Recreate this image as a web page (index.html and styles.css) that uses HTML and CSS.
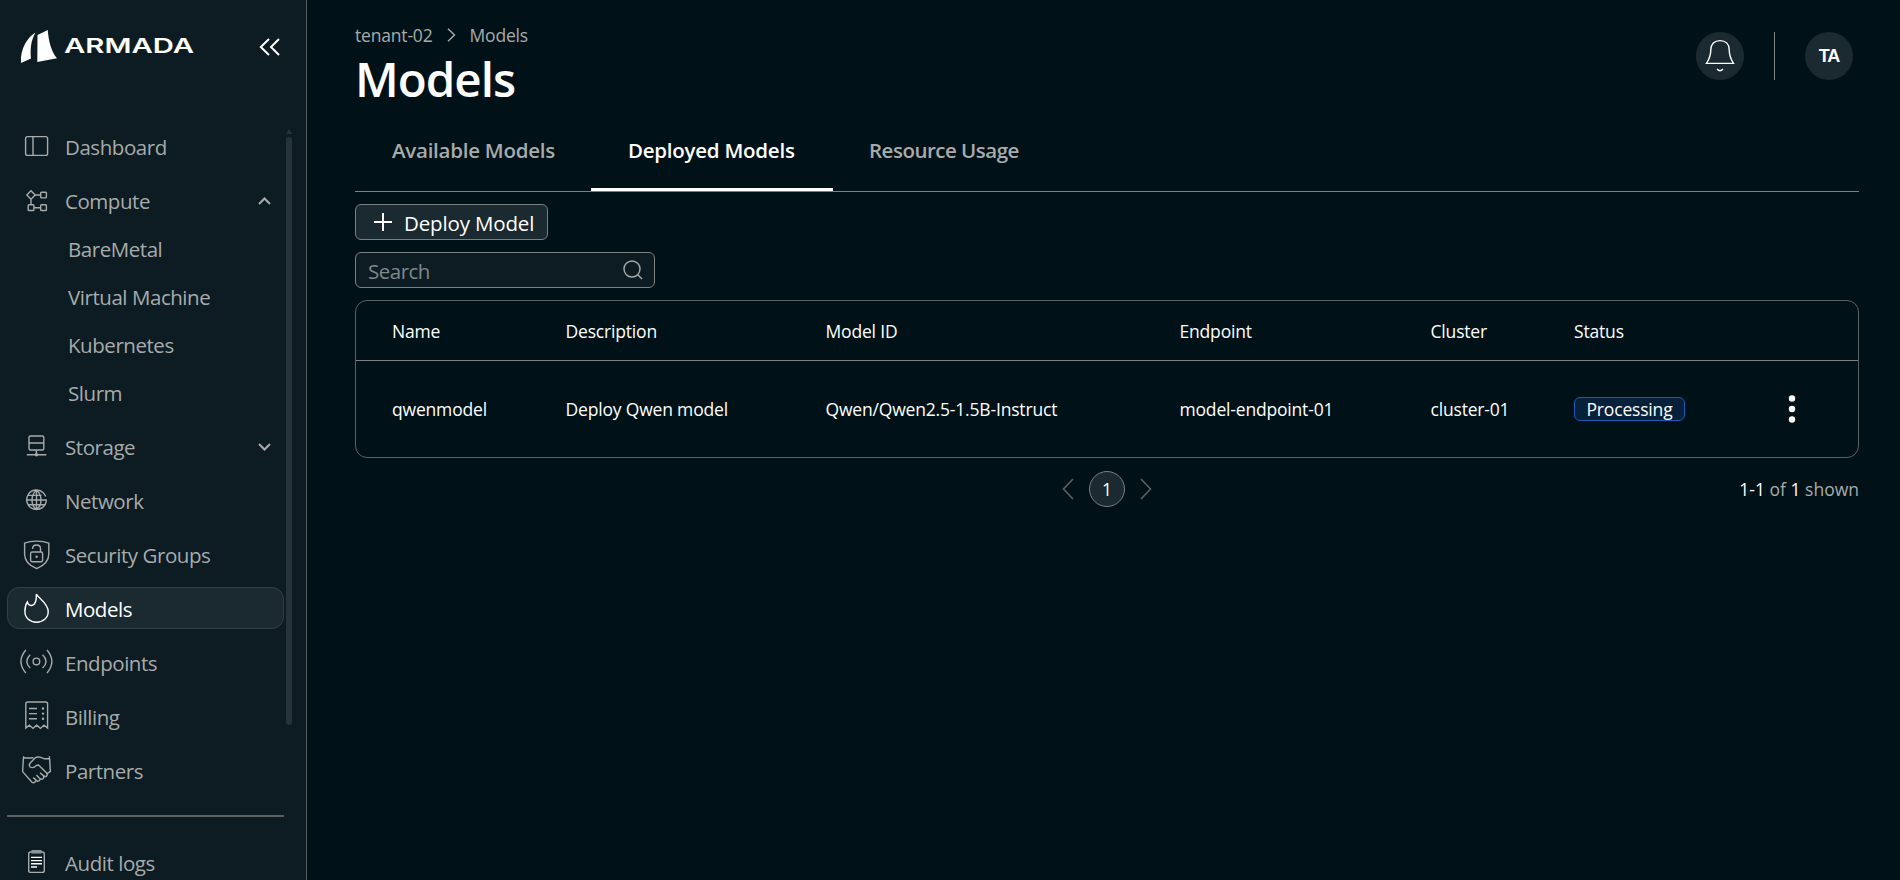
FILE: index.html
```html
<!DOCTYPE html>
<html lang="en">
  <head>
    <meta charset="utf-8">
    <meta name="viewport" content="width=device-width, initial-scale=1">
    <title>Models</title>
    <link rel="stylesheet" href="styles.css">
  </head>

  <body>
  <div id="app">
    <aside class="sidebar">
      <div class="brand">
        <svg class="logo" width="176" height="34" viewBox="0 0 176 34">
          <path d="M15.5 2.5 C8 7 0 18 1 33 L11 28.5 C10 19 11 10 15.5 2.5Z"/>
          <path d="M17.5 5 L27.8 0 C28.5 11 31.5 22 37 28.3 L17.3 32Z"/>
          <text x="44" y="22.8" textLength="130" lengthAdjust="spacingAndGlyphs">ARMADA</text>
        </svg>
        <svg class="collapse" width="22" height="18" viewBox="0 0 22 18"><path d="M10 1 L1.8 9 L10 17 M20 1 L12 9 L20 17"/></svg>
      </div>

      <nav class="menu">
        <a class="item">
          <svg class="icon" viewBox="0 0 33 34"><rect x="5.6" y="7.6" width="22" height="18.8" rx="2"/><path d="M13 7.6V26.4"/></svg>
          <span>Dashboard</span>
        </a>
        <a class="item">
          <svg class="icon" viewBox="0 0 33 34"><path d="M11 7.8L15.2 12L11 16.2L6.8 12Z M15.2 12H20.7 M11 16.2V21.7 M14 24.7H20.7"/><rect x="20.7" y="9.2" width="5.7" height="5.7" rx=".8"/><rect x="8.2" y="21.8" width="5.7" height="5.7" rx=".8"/><rect x="20.7" y="21.8" width="5.7" height="5.7" rx=".8"/></svg>
          <span>Compute</span>
          <svg class="arrow" viewBox="0 0 13 8"><path d="M1 7L6.5 1.5L12 7"/></svg>
        </a>
        <div class="submenu">
          <a>BareMetal</a>
          <a>Virtual Machine</a>
          <a>Kubernetes</a>
          <a>Slurm</a>
        </div>
        <a class="item">
          <svg class="icon" viewBox="0 0 33 34"><rect x="9" y="7" width="14.8" height="14" rx="1.5"/><path d="M9 14H23.8 M16.4 21V26 M6.8 25.8H26.3"/><circle cx="16.4" cy="25.8" r="1" /></svg>
          <span>Storage</span>
          <svg class="arrow" viewBox="0 0 13 8"><path d="M1 1L6.5 6.5L12 1"/></svg>
        </a>
        <a class="item">
          <svg class="icon" viewBox="0 0 33 34"><path d="M23.5 9.9A9.8 9.8 0 1 0 26.3 17H6.7 M7.8 12.4H21.5 M7.8 21.8H25.2 M16.5 7.2V26.8 M16.5 7.2C10.5 12 10.5 22 16.5 26.8 M16.5 7.2C22.5 12 22.5 22 16.5 26.8 M25.7 13.6A9.8 9.8 0 0 0 22.5 9.2"/></svg>
          <span>Network</span>
        </a>
        <a class="item">
          <svg class="icon" viewBox="0 0 33 34"><path d="M4.6 6.2C11 3.4 22 3.4 28.8 6.2V17C28.8 24.5 23.5 28.8 16.7 31.7C9.8 28.8 4.6 24.5 4.6 17Z"/><rect x="10.6" y="15" width="12" height="9.8" rx="1.5"/><path d="M12.6 12V11.5C12.6 6.8 20.5 6.8 20.5 11.5V15"/><circle class="dot" cx="16.6" cy="19.7" r="1.2"/></svg>
          <span>Security Groups</span>
        </a>
        <a class="item active">
          <svg class="icon" viewBox="0 0 33 34"><path d="M16.3 3.2C18.5 7.2 28.2 12.5 28.2 20.6C28.2 27 23 31.2 16.5 31.2C10 31.2 4.9 27 4.9 20.5C4.9 16.5 5.6 13.5 7.4 10.9C8 13.5 10 14.8 12.2 14.3C15.2 13.5 16.6 8.5 16.3 3.2Z"/></svg>
          <span>Models</span>
        </a>
        <a class="item">
          <svg class="icon" viewBox="0 0 33 34"><circle cx="16.4" cy="16.4" r="3.3"/><path d="M5.8 5Q-4 16.5 5.8 28 M27 5Q36.8 16.5 27 28 M10.2 9.8Q3.4 16.4 10.2 23 M22.6 9.8Q29.4 16.4 22.6 23"/></svg>
          <span>Endpoints</span>
        </a>
        <a class="item">
          <svg class="icon" viewBox="0 0 33 34"><path d="M5.8 29V5Q5.8 3 7.8 3H25.6Q27.6 3 27.6 5V29L24 26.2L20.4 29.4L16.7 26.2L13 29.4L9.4 26.2Z M9 9.5H17 M9 14.6H17 M9 19.8H17"/><path class="dots" d="M23 9.5h.01 M23 14.6h.01 M23 19.8h.01"/></svg>
          <span>Billing</span>
        </a>
        <a class="item">
          <svg class="icon" viewBox="0 0 33 34"><path d="M3.6 3.3V5H10.5L13.5 4.6 M3.4 5L2.6 18.6L12 29.2Q13.6 30.6 15.2 28.8L17 27 M29.4 3.3V5.6L24.5 5.8L20 4.2Q17.2 3.4 15 5L10.2 10Q8.4 12.4 10.3 14Q13.2 15.8 16.4 12.4L18.5 12L26.6 20Q28 22 26.4 23.3Q25 24 23.3 22.6L20 19.8 M29.6 5.6L30.4 18.4L26.8 20.8 M23.5 23Q24.2 25.6 22.2 26.2Q20.8 26.6 19.2 25L16.4 22 M20 25.6Q20 28.4 17.6 28.2L13.2 24.6"/></svg>
          <span>Partners</span>
        </a>
        <hr>
        <a class="item">
          <svg class="icon" viewBox="0 0 33 34"><rect x="8.7" y="7" width="15.6" height="20.4" rx="2"/><rect class="clip" x="11.5" y="5" width="10" height="3.6"/><path class="lines" d="M11 12.4H22 M11 15.6H22 M11 18.8H22 M11 22H17"/></svg>
          <span>Audit logs</span>
        </a>
      </nav>
      <div class="scrollbar"></div>
    </aside>

    <main>
      <header>
        <div>
          <div class="breadcrumb">
            <span>tenant-02</span>
            <svg width="9" height="14" viewBox="0 0 9 14"><path d="M1 .8L7.5 7L1 13.2"/></svg>
            <span>Models</span>
          </div>
          <h1>Models</h1>
        </div>
        <div class="user">
          <div class="round">
            <svg width="30" height="34" viewBox="0 0 30 34"><path d="M1.5 24.4C5 19 5.8 15.5 5.8 10.8C5.8 5 9.5 1.6 15 1.6C20.5 1.6 24.2 5 24.2 10.8C24.2 15.5 25 19 28.5 24.4Z M12 30Q15 33.4 18 30"/></svg>
          </div>
          <div class="round avatar">TA</div>
        </div>
      </header>

      <div class="tabs">
        <a class="tab available">Available Models</a>
        <a class="tab deployed selected">Deployed Models</a>
        <a class="tab usage">Resource Usage</a>
      </div>

      <button class="deploy">
        <svg width="18" height="18" viewBox="0 0 18 18"><path d="M9 0V18M0 9H18"/></svg>
        <span>Deploy Model</span>
      </button>

      <div class="search">
        <span>Search</span>
        <svg width="20" height="20" viewBox="0 0 20 20"><circle cx="9" cy="9" r="8"/><path d="M14.5 14.5L19 19"/></svg>
      </div>

      <div class="table">
        <div class="row head">
          <span>Name</span>
          <span>Description</span>
          <span>Model ID</span>
          <span>Endpoint</span>
          <span>Cluster</span>
          <span>Status</span>
        </div>
        <div class="row">
          <span>qwenmodel</span>
          <span>Deploy Qwen model</span>
          <span>Qwen/Qwen2.5-1.5B-Instruct</span>
          <span>model-endpoint-01</span>
          <span>cluster-01</span>
          <div><span class="chip">Processing</span></div>
          <svg class="more" width="8" height="30" viewBox="0 0 8 30"><circle cx="4" cy="4.5" r="3.2"/><circle cx="4" cy="15" r="3.2"/><circle cx="4" cy="25.5" r="3.2"/></svg>
        </div>
      </div>

      <div class="pagination">
        <div class="pages">
          <svg width="12" height="22" viewBox="0 0 12 22"><path d="M11 1L1.5 11L11 21"/></svg>
          <span class="page">1</span>
          <svg width="12" height="22" viewBox="0 0 12 22"><path d="M1 1L10.5 11L1 21"/></svg>
        </div>
        <div class="shown"><b>1-1</b> of <b>1</b> shown</div>
      </div>
    </main>
  </div>
  </body>
</html>
```
FILE: styles.css
```css
* {
  box-sizing: border-box;
}
body {
  margin: 0;
  background-color: #001217;
  color: #fff;
  font-family: "Segoe UI", "Open Sans", "Noto Sans", sans-serif;
  font-size: 17.5px;
  letter-spacing: -0.18px;
  overflow: hidden;
}
svg {
  fill: none;
  stroke: currentColor;
  stroke-width: 1.4;
  flex-shrink: 0;
}
#app {
  display: flex;
  height: 100vh;
}

/* sidebar */
.sidebar {
  position: relative;
  width: 307px;
  flex-shrink: 0;
  background-color: #0c1c22;
  border-right: 1px solid #5b6163;
  overflow: hidden;
}
.brand {
  display: flex;
  justify-content: space-between;
  padding: 30px 25px 0 20px;
  height: 119px;
}
.logo {
  fill: #fff;
  stroke: none;
  font-family: Inter, sans-serif;
  font-size: 20px;
  font-weight: 600;
  letter-spacing: 0;
}
.collapse {
  margin-top: 8px;
  stroke-width: 2;
}
.menu {
  width: 284px;
  padding-left: 7px;
  color: #a8abac;
  font-size: 20.5px;
  letter-spacing: -0.45px;
}
.item {
  display: flex;
  align-items: center;
  height: 42px;
  margin: 6px 0 12px;
  padding: 0 12px;
  border: 1px solid transparent;
  border-radius: 12px;
}
.item + .item, .submenu + .item {
  margin-top: 0;
}
.item span {
  flex: 1;
  padding: 2px 0 0 12px;
}
.active {
  background-color: #1b2a31;
  border-color: #323f45;
  color: #fff;
}
.icon {
  width: 33px;
  height: 34px;
}
.icon .dot {
  fill: currentColor;
  stroke: none;
}
.icon .dots {
  stroke-width: 2.4;
  stroke-linecap: round;
}
.icon .clip {
  fill: #8b9496;
  stroke: none;
}
.icon .lines {
  stroke: #fff;
}
.arrow {
  width: 13px;
  height: 8px;
  margin-top: 2px;
  stroke-width: 2;
}
.submenu {
  margin: -9px 0 9px;
  padding-left: 61px;
}
.submenu a {
  display: block;
  height: 48px;
  line-height: 50px;
}
.menu hr {
  height: 2px;
  margin: 24px 0;
  border: none;
  background-color: #5b6163;
}
.scrollbar {
  position: absolute;
  left: 286px;
  top: 137px;
  width: 6px;
  height: 588px;
  border-radius: 3px;
  background-color: #26343a;
}
.scrollbar::before {
  content: "";
  position: absolute;
  top: -8px;
  border: 3px solid transparent;
  border-top: none;
  border-bottom: 5px solid #26343a;
}

/* content */
main {
  flex: 1;
  padding: 21px 41px 0 48px;
}
header {
  display: flex;
  justify-content: space-between;
  height: 95px;
}
.breadcrumb {
  display: flex;
  align-items: center;
  gap: 14px;
  height: 28px;
  color: #a8abac;
}
h1 {
  margin: 2px 0 0;
  font-size: 47.5px;
  line-height: 56px;
  font-weight: 600;
  letter-spacing: -1px;
}
.user {
  display: flex;
  gap: 30px;
  margin: 11px 6px 0 0;
}
.round {
  display: flex;
  align-items: center;
  justify-content: center;
  width: 48px;
  height: 48px;
  border-radius: 50%;
  background-color: #1b2a31;
}
.avatar {
  position: relative;
  margin-left: 31px;
  font: bold 18px "Liberation Sans", sans-serif;
  letter-spacing: -1px;
}
.avatar::before {
  content: "";
  position: absolute;
  left: -31px;
  width: 1px;
  height: 48px;
  background-color: #7c8082;
}
.tabs {
  display: flex;
  height: 76px;
  border-bottom: 1px solid #7c8082;
  font-size: 20.5px;
  font-weight: 600;
  letter-spacing: -0.25px;
}
.tab {
  padding: 0 37px;
  line-height: 68px;
  color: #a8abac;
  white-space: nowrap;
}
.available {
  width: 236px;
}
.deployed {
  width: 242px;
}
.usage {
  padding-left: 36px;
  letter-spacing: -0.5px;
}
.selected {
  color: #fff;
  border-bottom: 3px solid #fff;
}
.deploy {
  display: flex;
  align-items: center;
  width: 193px;
  height: 36px;
  margin-top: 12px;
  padding: 0 0 0 18px;
  border: 1px solid #7c8082;
  border-radius: 6px;
  background-color: #1b2a31;
  color: #fff;
  font-family: inherit;
  font-size: 20.5px;
  letter-spacing: -0.15px;
}
.deploy svg {
  stroke-width: 2;
}
.deploy span {
  padding: 1px 0 0 12px;
}
.search {
  display: flex;
  align-items: center;
  justify-content: space-between;
  width: 300px;
  height: 36px;
  margin-top: 12px;
  padding: 0 11px 0 12px;
  border: 1px solid #7c8082;
  border-radius: 6px;
  background-color: #0c1c22;
  color: #808789;
  font-size: 20.5px;
  letter-spacing: -0.5px;
}
.search span {
  padding-top: 1px;
}
.search svg {
  color: #a8abac;
}
.table {
  height: 158px;
  margin-top: 12px;
  border: 1px solid #5b6163;
  border-radius: 12px;
}
.row {
  display: grid;
  grid-template-columns: 173.5px 260px 354px 251px 143.5px 214px auto;
  align-items: center;
  height: 96px;
  padding-left: 36px;
}
.head {
  height: 60px;
  border-bottom: 1px solid #7c8082;
}
.chip {
  display: block;
  width: 111px;
  height: 24px;
  border: 1px solid #1d58b5;
  border-radius: 6px;
  background-color: #08213b;
  line-height: 22px;
  text-align: center;
}
.more {
  fill: #fff;
  stroke: none;
}
.pagination {
  position: relative;
  display: flex;
  justify-content: center;
  align-items: center;
  height: 36px;
  margin-top: 13px;
}
.pages {
  display: flex;
  align-items: center;
  gap: 15px;
  color: #5b6163;
}
.pages svg {
  stroke-width: 1.6;
}
.page {
  width: 36px;
  height: 36px;
  border: 1px solid #7c8082;
  border-radius: 50%;
  background-color: #1b2a31;
  color: #fff;
  line-height: 34px;
  text-align: center;
}
.shown {
  position: absolute;
  right: 0;
  color: #a8abac;
  letter-spacing: 0;
}
.shown b {
  color: #fff;
  font-weight: 400;
}
```
